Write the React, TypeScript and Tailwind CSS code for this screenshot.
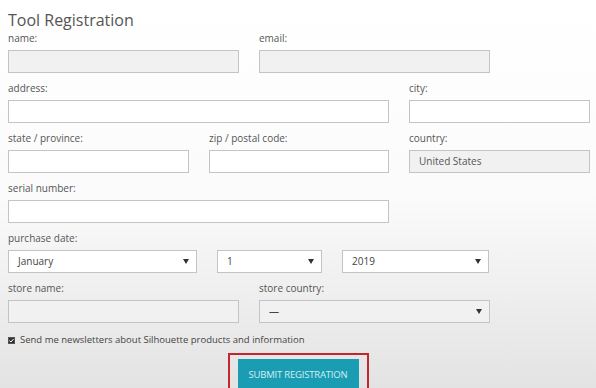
import React from "react";

const font = { fontFamily: '"Open Sans", "Liberation Sans", sans-serif' };

function Label({ children }: { children: React.ReactNode }) {
  return <div className="text-[10px] leading-[14px] text-[#555] mb-[5px]">{children}</div>;
}

function Input({ w, gray, value }: { w: string; gray?: boolean; value?: string }) {
  return (
    <div
      className={`${w} h-[23px] border border-[#c4c4c4] flex items-center px-[9px] text-[10px] text-[#555] ${
        gray ? "bg-[#f1f1f1]" : "bg-white"
      }`}
    >
      {value}
    </div>
  );
}

function Select({ w, value, gray }: { w: string; value: string; gray?: boolean }) {
  return (
    <div
      className={`${w} h-[23px] border border-[#c4c4c4] flex items-center justify-between pl-[9px] pr-[7px] text-[10px] text-[#444] ${
        gray ? "bg-[#f1f1f1]" : "bg-white"
      }`}
    >
      <span>{value}</span>
      <svg width="6" height="5" viewBox="0 0 6 5">
        <path d="M0 0 H6 L3 5 Z" fill="#333" />
      </svg>
    </div>
  );
}

function Field({
  label,
  children,
}: {
  label: string;
  children: React.ReactNode;
}) {
  return (
    <div className="flex flex-col">
      <Label>{label}</Label>
      {children}
    </div>
  );
}

export default function App() {
  return (
    <div
      className="w-[596px] h-[388px] overflow-hidden bg-gradient-to-b from-white via-[#fbfbfb] to-[#e3e3e3] px-2 pt-[9px]"
      style={font}
    >
      <h1 className="text-[16px] leading-[22px] text-[#555] font-normal">Tool Registration</h1>

      <div className="flex flex-col gap-[8px]">
        <div className="flex gap-5">
          <Field label="name:">
            <Input w="w-[231px]" gray />
          </Field>
          <Field label="email:">
            <Input w="w-[231px]" gray />
          </Field>
        </div>

        <div className="flex gap-5">
          <Field label="address:">
            <Input w="w-[381px]" />
          </Field>
          <Field label="city:">
            <Input w="w-[181px]" />
          </Field>
        </div>

        <div className="flex gap-5">
          <Field label="state / province:">
            <Input w="w-[181px]" />
          </Field>
          <Field label="zip / postal code:">
            <Input w="w-[180px]" />
          </Field>
          <Field label="country:">
            <Input w="w-[181px]" gray value="United States" />
          </Field>
        </div>

        <Field label="serial number:">
          <Input w="w-[381px]" />
        </Field>

        <div className="flex flex-col">
          <Label>purchase date:</Label>
          <div className="flex gap-5">
            <Select w="w-[189px]" value="January" />
            <Select w="w-[105px]" value="1" />
            <Select w="w-[147px]" value="2019" />
          </div>
        </div>

        <div className="flex gap-5">
          <Field label="store name:">
            <Input w="w-[231px]" gray />
          </Field>
          <Field label="store country:">
            <Select w="w-[231px]" value="—" gray />
          </Field>
        </div>
      </div>

      <div className="flex items-center gap-[5px] mt-[10px] text-[9.5px] leading-[14px] text-[#444]">
        <span className="w-[7px] h-[7px] border border-[#555] bg-[#333] flex items-center justify-center">
          <svg width="5" height="5" viewBox="0 0 5 5">
            <path d="M0.5 2.5 L2 4 L4.5 1" stroke="white" strokeWidth="1" fill="none" />
          </svg>
        </span>
        <span>Send me newsletters about Silhouette products and information</span>
      </div>

      <div className="flex justify-center mt-[6px]">
        <div className="border-2 border-[#c5262d] px-[8px] pt-[4px] pb-[6px]">
          <button className="bg-[#1a9db3] text-[#d2eef3] text-[9.5px] tracking-[-0.2px] uppercase h-[32px] px-[8px] w-[121px]">
            Submit Registration
          </button>
        </div>
      </div>
    </div>
  );
}
